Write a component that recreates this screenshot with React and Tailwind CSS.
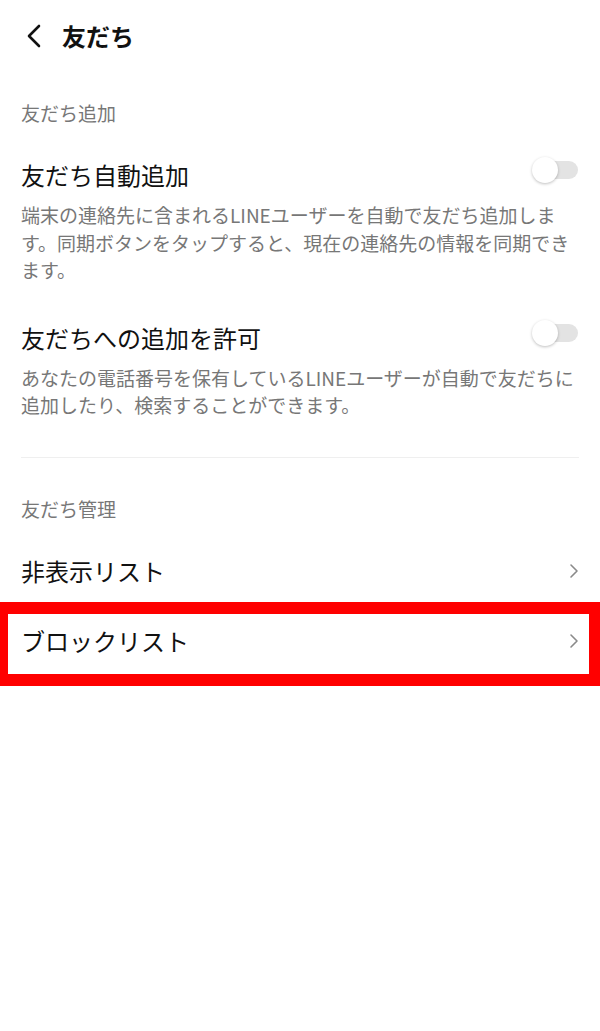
import React from 'react'

const FONT = { fontFamily: '"Noto Sans CJK JP", "Noto Sans", sans-serif' }

function Toggle() {
  return (
    <div className="relative w-[46px] h-[26px] flex items-center shrink-0">
      <div className="w-[44px] h-[18px] ml-[2px] rounded-full bg-[#e3e3e3]" />
      <div className="absolute left-0 top-0 w-[26px] h-[26px] rounded-full bg-white shadow-[0_1px_3px_rgba(0,0,0,0.25)]" />
    </div>
  )
}

function Chevron() {
  return (
    <svg width="12" height="16" viewBox="0 0 12 16" className="shrink-0 mr-[-1px]">
      <path d="M3 2 L9 8 L3 14" fill="none" stroke="#8a8a8a" strokeWidth="1.6" strokeLinecap="round" strokeLinejoin="round" />
    </svg>
  )
}

function SwitchItem({ title, lines, gapTop }) {
  return (
    <div className={gapTop}>
      <div className="flex items-start justify-between">
        <div className="text-[24px] leading-[34px] text-[#111]">{title}</div>
        <div className="mt-[-1px] mr-[1px]"><Toggle /></div>
      </div>
      <div className="mt-[9px] text-[19px] leading-[27.5px] text-[#777]">
        {lines.map((l, i) => (
          <div key={i} className="whitespace-nowrap">{l}</div>
        ))}
      </div>
    </div>
  )
}

function LinkRow({ label }) {
  return (
    <div className="h-[70px] flex items-center justify-between">
      <span className="text-[24px] text-[#111]">{label}</span>
      <Chevron />
    </div>
  )
}

export default function App() {
  return (
    <div className="w-[600px] h-[1031px] bg-white" style={FONT}>
      <div className="h-[72px] flex items-center px-[24px]">
        <svg width="20" height="26" viewBox="0 0 20 26">
          <path d="M15 3 L5 13 L15 23" fill="none" stroke="#111" strokeWidth="2.6" strokeLinecap="round" strokeLinejoin="round" />
        </svg>
        <span className="ml-[18px] text-[24px] font-bold text-[#111]">友だち</span>
      </div>

      <div className="px-[21px]">
        <div className="pt-[27px] text-[19px] leading-[28px] text-[#777]">友だち追加</div>

        <SwitchItem
          gapTop="mt-[31px]"
          title="友だち自動追加"
          lines={[
            '端末の連絡先に含まれるLINEユーザーを自動で友だち追加しま',
            'す。同期ボタンをタップすると、現在の連絡先の情報を同期でき',
            'ます。',
          ]}
        />

        <SwitchItem
          gapTop="mt-[37px]"
          title="友だちへの追加を許可"
          lines={[
            'あなたの電話番号を保有しているLINEユーザーが自動で友だちに',
            '追加したり、検索することができます。',
          ]}
        />

        <div className="mt-[38px] h-px bg-[#efefef]" />

        <div className="mt-[37px] text-[19px] leading-[28px] text-[#777]">友だち管理</div>

        <div className="mt-[13px]">
          <LinkRow label="非表示リスト" />
        </div>
      </div>

      <div className="relative px-[21px]">
        <LinkRow label="ブロックリスト" />
        <div className="absolute left-0 right-0 top-[-4px] bottom-[-10px] border-solid border-[#ff0000] border-t-[12px] border-b-[12px] border-l-[8px] border-r-[11px]" />
      </div>
    </div>
  )
}
